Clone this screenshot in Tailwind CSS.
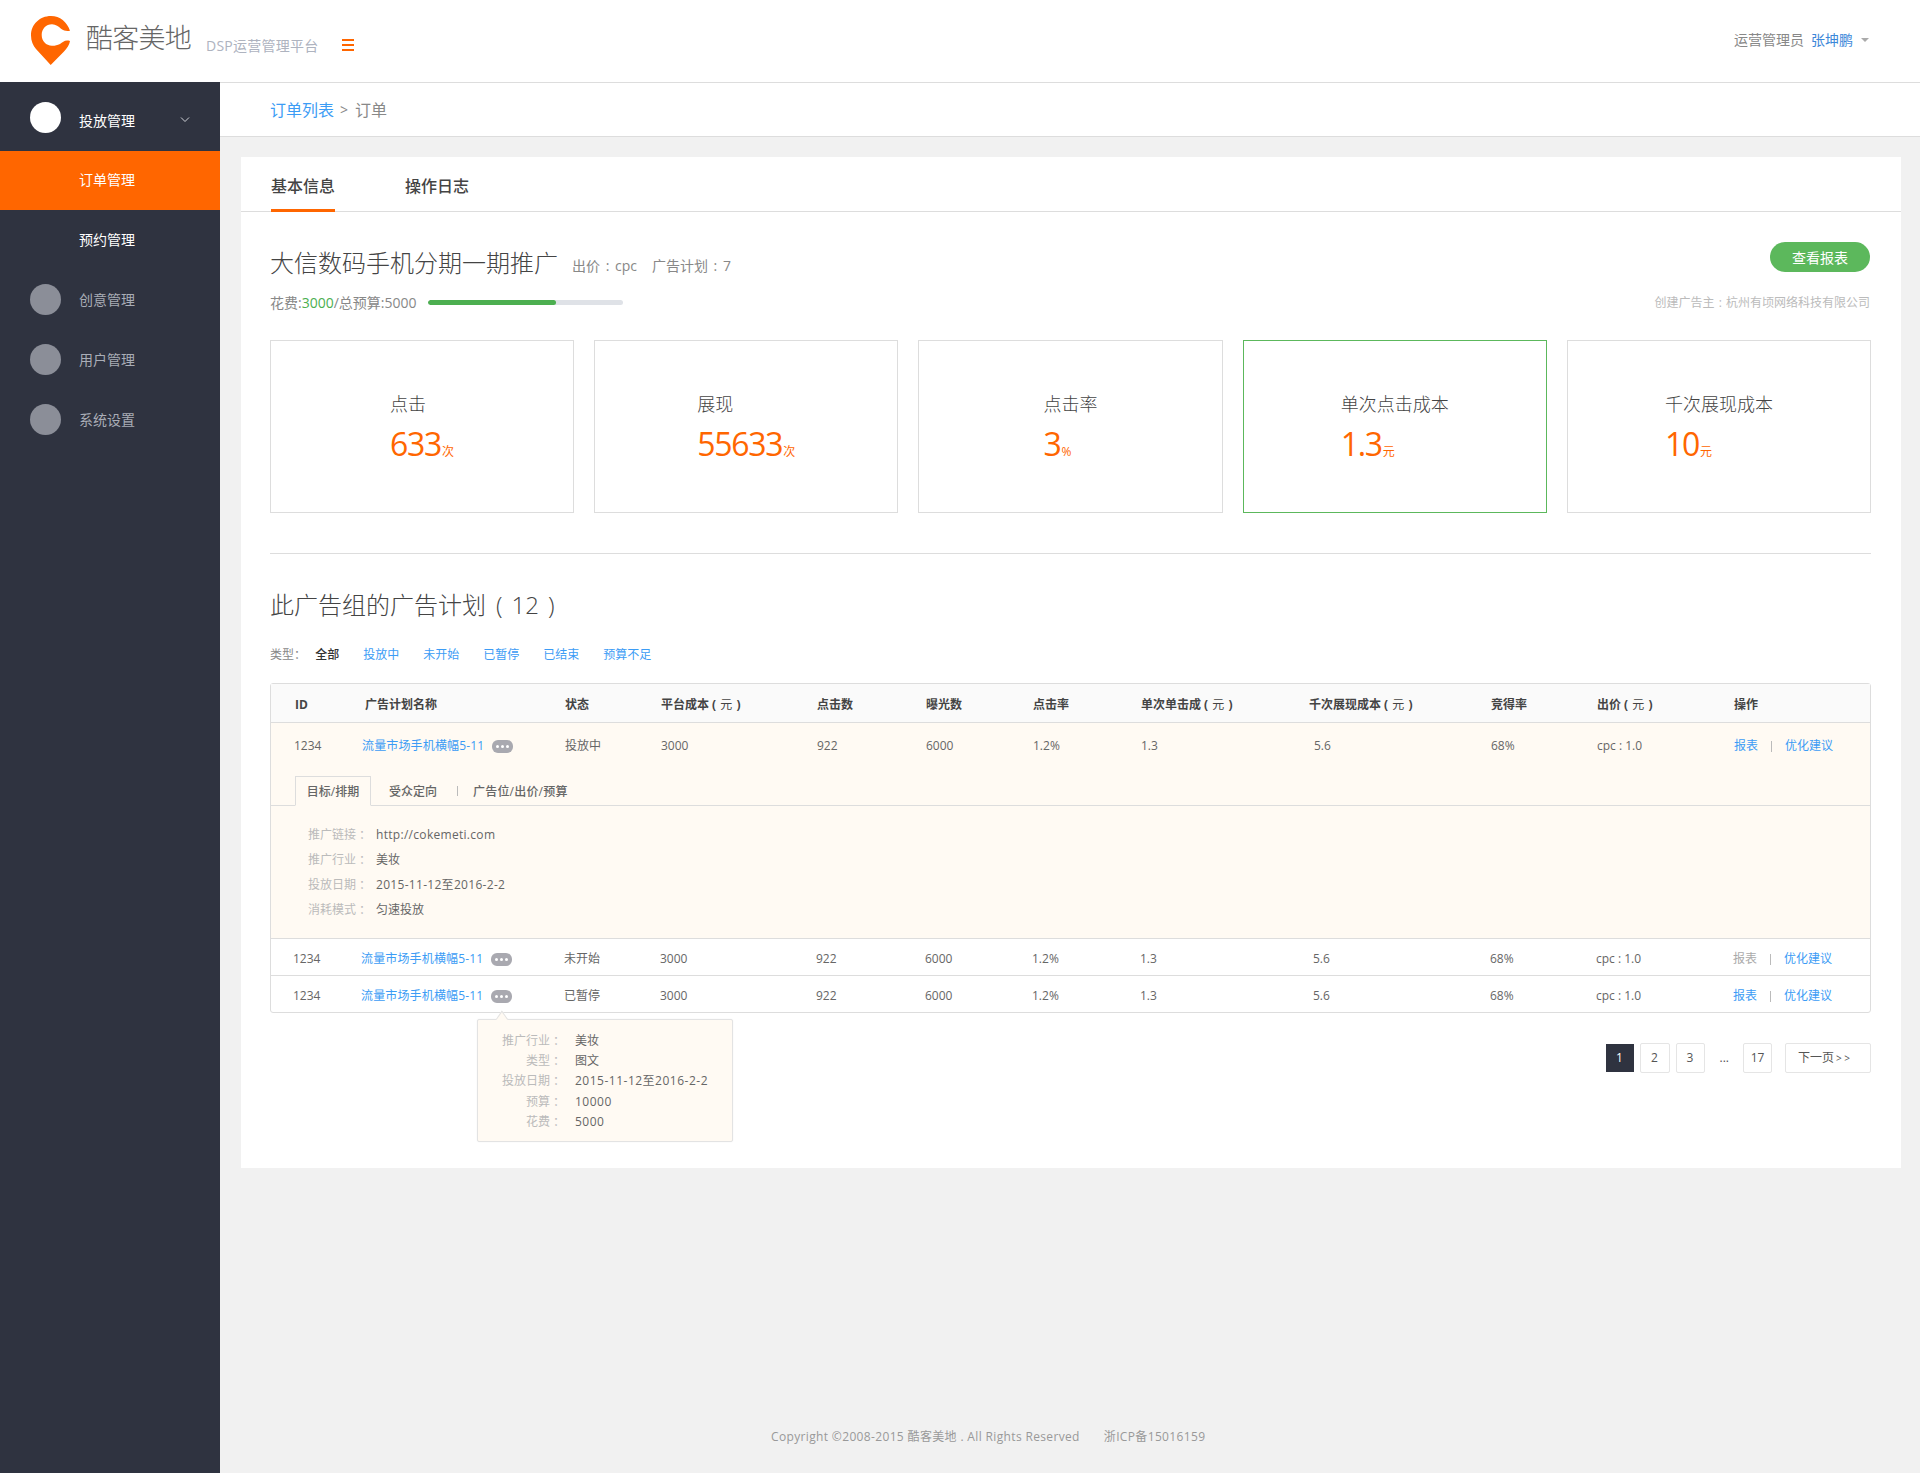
<!DOCTYPE html>
<html lang="zh-CN">
<head>
  <meta charset="UTF-8" />
  <title>订单 - 酷客美地</title>
  <script src="https://cdn.jsdelivr.net/npm/@tailwindcss/browser@4"></script>
</head>
<body class="bg-[#f1f1f1] text-[#666] font-['Open_Sans','Noto_Sans_CJK_SC',sans-serif]">
  <div class="flex flex-col h-[1473px] w-[1920px] overflow-hidden">

    <!-- Header -->
    <header class="flex items-center h-[83px] bg-white border-b border-[#ddd] shrink-0">
      <svg class="ml-[31px] w-[40px] h-[50px]" viewBox="0 0 40 50">
        <path fill="#ff6600" d="M39 14.700C36 6 29 0 20 0C8.500 0 0 8.500 0 19.500C0 25 2 29.500 5 33L19.700 49L33 35.500C36 32.500 38.500 28.500 39 25C34 23.500 32 26 29 28C26 29.500 23.500 29.800 21 29.700C15 29.700 10.700 25 10.700 19C10.700 13 15 8.300 21 8.300C25 8.300 27.500 10.500 30 12.700C33 15 36 15.200 39 14.700Z" />
      </svg>
      <span class="ml-[15px] text-[27px] font-light leading-none text-[#666] tracking-[-0.75px] mb-[8px]">酷客美地</span>
      <span class="ml-[15px] text-[14px] tracking-[0.25px] text-[#aeb3bf] mt-[8px]">DSP运营管理平台</span>
      <div class="ml-[23px] mt-[8px] w-[12px] h-[12px] flex flex-col justify-between">
        <i class="block h-[2px] bg-[#ff6600]"></i>
        <i class="block h-[2px] bg-[#ff6600]"></i>
        <i class="block h-[2px] bg-[#ff6600]"></i>
      </div>
      <div class="ml-auto mr-[51px] mb-[3px] flex items-center text-[14px]">
        <span class="text-[#888]">运营管理员</span>
        <span class="ml-[7px] text-[#3c87d9]">张坤鹏</span>
        <i class="ml-[8px] mt-[1px] w-0 h-0 border-x-[4px] border-x-transparent border-t-[4px] border-t-[#aaa]"></i>
      </div>
    </header>

    <div class="flex flex-1 min-h-0">
      <!-- Sidebar -->
      <aside class="w-[220px] shrink-0 bg-[#2f3340] text-[14px] text-[#a9adb6] -mt-px">
        <div class="flex items-center h-[69px] pl-[30px] text-white">
          <span class="w-[31px] h-[31px] rounded-full bg-white mt-[2px]"></span>
          <span class="ml-[18px] mt-[7px]">投放管理</span>
          <svg class="ml-[45px] w-[10px] h-[6px] mt-[7px]" viewBox="0 0 10 6" fill="none" stroke="#cfd1d6" stroke-width="1"><path d="M1 .5l4 4 4-4" /></svg>
        </div>
        <div class="flex items-center h-[59px] pl-[79px] pb-[3px] bg-[#ff6600] text-white">订单管理</div>
        <div class="flex items-center h-[60px] pl-[79px] pb-[2px] text-white">预约管理</div>
        <div class="flex items-center h-[60px] pl-[30px] pb-[2px]">
          <span class="w-[31px] h-[31px] rounded-full bg-[#8b8e98]"></span>
          <span class="ml-[18px]">创意管理</span>
        </div>
        <div class="flex items-center h-[60px] pl-[30px] pb-[2px]">
          <span class="w-[31px] h-[31px] rounded-full bg-[#8b8e98]"></span>
          <span class="ml-[18px]">用户管理</span>
        </div>
        <div class="flex items-center h-[60px] pl-[30px] pb-[2px]">
          <span class="w-[31px] h-[31px] rounded-full bg-[#8b8e98]"></span>
          <span class="ml-[18px]">系统设置</span>
        </div>
      </aside>

      <main class="flex-1 min-w-0 flex flex-col">
        <!-- Breadcrumb -->
        <div class="flex items-center h-[54px] pl-[50px] bg-white border-b border-[#ddd] text-[16px] text-[#888]">
          <a class="text-[#3c9cf5]">订单列表</a>
          <span class="ml-[6px] mr-[7px] text-[14px]">&gt;</span>
          <span>订单</span>
        </div>

        <!-- Card -->
        <section class="relative mt-[20px] ml-[21px] mr-[19px] h-[1011px] bg-white">
          <div class="flex h-[55px] pl-[30px] gap-[70px] border-b border-[#ddd] text-[16px] font-medium text-[#444]">
            <span class="h-[55px] leading-[58px] border-b-[3px] border-[#ff6600]">基本信息</span>
            <span class="leading-[58px]">操作日志</span>
          </div>

          <div class="pl-[29px] pr-[30px]">
            <!-- Title row -->
            <div class="flex items-start mt-[30px]">
              <div>
                <div class="flex items-center h-[36px] pt-[5px]">
                  <h1 class="text-[24px] font-light text-[#444]">大信数码手机分期一期推广</h1>
                  <span class="ml-[14px] mt-[5px] text-[14px] text-[#888] [word-spacing:2px]">出价 : cpc</span>
                  <span class="ml-[15px] mt-[5px] text-[14px] text-[#888] [word-spacing:2px]">广告计划 : 7</span>
                </div>
                <div class="flex items-center h-[20px] mt-[14px] text-[14px] text-[#888]">
                  <span>花费:<span class="text-[#4caf50]">3000</span>/总预算:5000</span>
                  <div class="ml-[11px] w-[195px] h-[5px] rounded-full bg-[#dfe2e7] overflow-hidden">
                    <div class="h-full bg-[#4caf50] rounded-full" style="width: 66%"></div>
                  </div>
                </div>
              </div>
              <div class="ml-auto flex flex-col items-end pr-[1px]">
                <button class="w-[100px] h-[30px] rounded-full bg-[#5cb85c] text-white text-[14px]">查看报表</button>
                <div class="mt-[22px] text-[12px] text-[#bbb] [word-spacing:1px]">创建广告主 : 杭州有顷网络科技有限公司</div>
              </div>
            </div>

            <!-- Stats -->
            <div class="grid grid-cols-5 gap-[20px] mt-[28px]">
              <div class="h-[173px] border border-[#ddd] flex items-center justify-center">
                <div class="mt-[9px]">
                  <div class="text-[18px] leading-[28px] font-light text-[#444]">点击</div>
                  <div class="mt-[6px] leading-[40px] text-[32px] tracking-[-1.3px] text-[#ff6600]">633<span class="ml-[1px] text-[12px] tracking-normal">次</span></div>
                </div>
              </div>
              <div class="h-[173px] border border-[#ddd] flex items-center justify-center">
                <div class="mt-[9px]">
                  <div class="text-[18px] leading-[28px] font-light text-[#444]">展现</div>
                  <div class="mt-[6px] leading-[40px] text-[32px] tracking-[-1.3px] text-[#ff6600]">55633<span class="ml-[1px] text-[12px] tracking-normal">次</span></div>
                </div>
              </div>
              <div class="h-[173px] border border-[#ddd] flex items-center justify-center">
                <div class="mt-[9px]">
                  <div class="text-[18px] leading-[28px] font-light text-[#444]">点击率</div>
                  <div class="mt-[6px] leading-[40px] text-[32px] tracking-[-1.3px] text-[#ff6600]">3<span class="ml-[1px] text-[12px] tracking-normal">%</span></div>
                </div>
              </div>
              <div class="h-[173px] border border-[#5cb85c] flex items-center justify-center">
                <div class="mt-[9px]">
                  <div class="text-[18px] leading-[28px] font-light text-[#444]">单次点击成本</div>
                  <div class="mt-[6px] leading-[40px] text-[32px] tracking-[-1.3px] text-[#ff6600]">1.3<span class="ml-[1px] text-[12px] tracking-normal">元</span></div>
                </div>
              </div>
              <div class="h-[173px] border border-[#ddd] flex items-center justify-center">
                <div class="mt-[9px]">
                  <div class="text-[18px] leading-[28px] font-light text-[#444]">千次展现成本</div>
                  <div class="mt-[6px] leading-[40px] text-[32px] tracking-[-1.3px] text-[#ff6600]">10<span class="ml-[1px] text-[12px] tracking-normal">元</span></div>
                </div>
              </div>
            </div>

            <div class="mt-[40px] border-t border-[#ddd]"></div>

            <!-- Plans -->
            <h2 class="mt-[33px] h-[36px] leading-[36px] text-[24px] font-light text-[#444]">此广告组的广告计划<span class="ml-[10px]">(</span><span class="mx-[9px]">12</span>)</h2>
            <div class="flex items-center gap-[24px] mt-[22px] h-[20px] text-[12px] text-[#3c9cf5]">
              <div class="text-[#888]">类型： <span class="ml-[6px] font-medium text-[#333]">全部</span></div>
              <a>投放中</a><a>未开始</a><a>已暂停</a><a>已结束</a><a>预算不足</a>
            </div>

            <!-- Table -->
            <div class="mt-[18px] border border-[#ddd] rounded-[3px] text-[12px] text-[#666]">
              <div class="grid grid-cols-[68px_203px_96px_156px_109px_107px_108px_169px_181px_106px_137px_1fr] items-center h-[39px] pl-[23px] pt-[3px] bg-[#fafafa] border-b border-[#ddd] font-bold text-[#444]">
                <span class="pl-[1px]">ID</span><span class="pl-[3px]">广告计划名称</span><span>状态</span><span>平台成本 ( <span class="mx-px font-normal">元</span> )</span><span>点击数</span><span>曝光数</span><span>点击率</span><span>单次单击成 ( <span class="mx-px font-normal">元</span> )</span><span class="-ml-[1px]">千次展现成本 ( <span class="mx-px font-normal">元</span> )</span><span>竞得率</span><span>出价 ( <span class="mx-px font-normal">元</span> )</span><span>操作</span>
              </div>

              <!-- Expanded row -->
              <div class="bg-[#fffaf3] border-b border-[#ddd] h-[216px]">
                <div class="grid grid-cols-[68px_203px_96px_156px_109px_107px_108px_169px_181px_106px_137px_1fr] items-center h-[46px] pl-[23px]">
                  <span>1234</span>
                  <span class="flex items-center"><a class="text-[#3c9cf5] tracking-[0.15px]">流量市场手机横幅5-11</a><i class="ml-[8px] flex items-center justify-center gap-[2px] w-[21px] h-[13px] rounded-[6px] bg-[#a9a9b0]"><b class="w-[3px] h-[3px] rounded-full bg-white"></b><b class="w-[3px] h-[3px] rounded-full bg-white"></b><b class="w-[3px] h-[3px] rounded-full bg-white"></b></i></span>
                  <span>投放中</span><span>3000</span><span>922</span><span>6000</span><span>1.2%</span><span>1.3</span><span class="pl-[4px]">5.6</span><span>68%</span><span>cpc : 1.0</span>
                  <span class="flex items-center"><a class="text-[#3c9cf5]">报表</a><i class="mx-[13px] w-px h-[11px] bg-[#bbb]"></i><a class="text-[#3c9cf5]">优化建议</a></span>
                </div>
                <div class="flex items-end h-[37px] pl-[24px] border-b border-[#ddd] font-medium text-[#666]">
                  <span class="flex items-center justify-center w-[76px] h-[30px] pt-[2px] -mb-px border border-[#ddd] border-b-[#fffaf3] bg-[#fffaf3]">目标/排期</span>
                  <span class="flex items-center h-[29px] pt-[2px] ml-[18px]">受众定向</span>
                  <i class="mb-[9px] ml-[20px] w-px h-[10px] bg-[#bbb]"></i>
                  <span class="flex items-center h-[29px] pt-[2px] ml-[15px] tracking-[0.2px]">广告位/出价/预算</span>
                </div>
                <dl class="grid grid-cols-[68px_1fr] auto-rows-[25px] items-center pl-[37px] pt-[16px]">
                  <dt class="text-[#bbb]">推广链接 ：</dt><dd class="tracking-[0.3px]">http://cokemeti.com</dd>
                  <dt class="text-[#bbb]">推广行业 ：</dt><dd>美妆</dd>
                  <dt class="text-[#bbb]">投放日期 ：</dt><dd class="tracking-[0.3px]">2015-11-12至2016-2-2</dd>
                  <dt class="text-[#bbb]">消耗模式 ：</dt><dd>匀速投放</dd>
                </dl>
              </div>

              <!-- Normal rows -->
              <div class="grid grid-cols-[68px_203px_96px_156px_109px_107px_108px_169px_181px_106px_137px_1fr] items-center h-[37px] pl-[22px] pt-[4px] border-b border-[#ddd]">
                <span>1234</span>
                <span class="flex items-center"><a class="text-[#3c9cf5] tracking-[0.15px]">流量市场手机横幅5-11</a><i class="ml-[8px] flex items-center justify-center gap-[2px] w-[21px] h-[13px] rounded-[6px] bg-[#a9a9b0]"><b class="w-[3px] h-[3px] rounded-full bg-white"></b><b class="w-[3px] h-[3px] rounded-full bg-white"></b><b class="w-[3px] h-[3px] rounded-full bg-white"></b></i></span>
                <span>未开始</span><span>3000</span><span>922</span><span>6000</span><span>1.2%</span><span>1.3</span><span class="pl-[4px]">5.6</span><span>68%</span><span>cpc : 1.0</span>
                <span class="flex items-center"><a class="text-[#aaa]">报表</a><i class="mx-[13px] w-px h-[11px] bg-[#bbb]"></i><a class="text-[#3c9cf5]">优化建议</a></span>
              </div>
              <div class="relative grid grid-cols-[68px_203px_96px_156px_109px_107px_108px_169px_181px_106px_137px_1fr] items-center h-[36px] pl-[22px] pt-[4px]">
                <span>1234</span>
                <span class="flex items-center"><a class="text-[#3c9cf5] tracking-[0.15px]">流量市场手机横幅5-11</a><i class="ml-[8px] flex items-center justify-center gap-[2px] w-[21px] h-[13px] rounded-[6px] bg-[#a9a9b0]"><b class="w-[3px] h-[3px] rounded-full bg-white"></b><b class="w-[3px] h-[3px] rounded-full bg-white"></b><b class="w-[3px] h-[3px] rounded-full bg-white"></b></i></span>
                <span>已暂停</span><span>3000</span><span>922</span><span>6000</span><span>1.2%</span><span>1.3</span><span class="pl-[4px]">5.6</span><span>68%</span><span>cpc : 1.0</span>
                <span class="flex items-center"><a class="text-[#3c9cf5]">报表</a><i class="mx-[13px] w-px h-[11px] bg-[#bbb]"></i><a class="text-[#3c9cf5]">优化建议</a></span>

                <!-- Tooltip -->
                <div class="absolute z-10 left-[206px] top-[43px] w-[256px] h-[123px] bg-[#fffaf3] border border-[#e3e3e3] rounded-[2px] shadow-[0_0_2px_rgba(0,0,0,0.05)]">
                  <span class="absolute left-[19px] -top-[6px] w-[10px] h-[10px] rotate-45 skew-x-[10deg] skew-y-[10deg] bg-[#fffaf3] border-l border-t border-[#e3e3e3]"></span>
                  <dl class="relative grid grid-cols-[87px_1fr] gap-x-[10px] auto-rows-[20.200px] items-center pt-[11px]">
                    <dt class="text-right text-[#bbb]">推广行业 ：</dt><dd>美妆</dd>
                    <dt class="text-right text-[#bbb]">类型 ：</dt><dd>图文</dd>
                    <dt class="text-right text-[#bbb]">投放日期 ：</dt><dd class="tracking-[0.5px]">2015-11-12至2016-2-2</dd>
                    <dt class="text-right text-[#bbb]">预算 ：</dt><dd class="tracking-[0.5px]">10000</dd>
                    <dt class="text-right text-[#bbb]">花费 ：</dt><dd class="tracking-[0.5px]">5000</dd>
                  </dl>
                </div>
              </div>
            </div>

            <!-- Pagination -->
            <div class="flex justify-end items-center mt-[30px] text-[12px] text-[#555]">
              <a class="flex items-center justify-center w-[28px] h-[28px] bg-[#2f3340] text-white">1</a>
              <a class="ml-[6px] flex items-center justify-center w-[30px] h-[30px] border border-[#e5e5e5] rounded-[2px]">2</a>
              <a class="ml-[6px] flex items-center justify-center w-[29px] h-[30px] border border-[#e5e5e5] rounded-[2px]">3</a>
              <span class="ml-[15px]">...</span>
              <a class="ml-[14px] flex items-center justify-center w-[29px] h-[30px] border border-[#e5e5e5] rounded-[2px]">17</a>
              <a class="ml-[13px] flex items-center pl-[12px] w-[86px] h-[30px] border border-[#e5e5e5] rounded-[2px]">下一页<span class="ml-[2px] text-[10px]">&gt; &gt;</span></a>
            </div>
          </div>
        </section>

        <!-- Footer -->
        <footer class="mt-auto h-[45px] pl-[551px] text-[12px] tracking-[0.35px] text-[#999]">
          Copyright ©2008-2015 酷客美地 . All Rights Reserved<span class="ml-[24px]">浙ICP备15016159</span>
        </footer>
      </main>
    </div>
  </div>
</body>
</html>
